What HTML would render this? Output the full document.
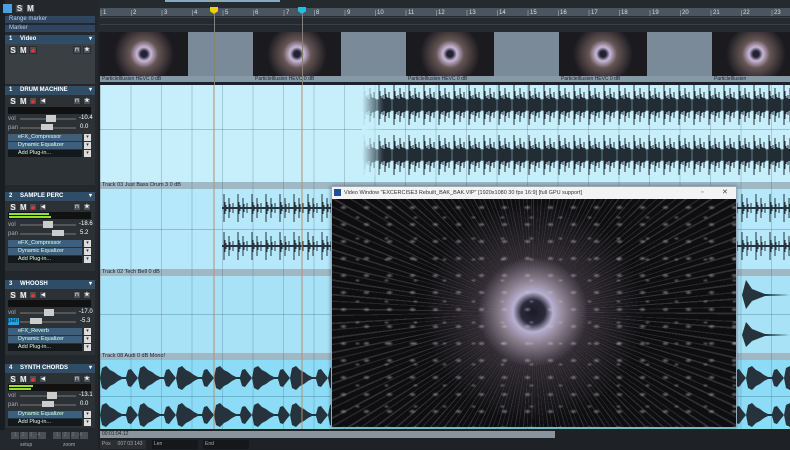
<!DOCTYPE html>
<html><head><meta charset="utf-8"><style>
*{margin:0;padding:0;box-sizing:border-box}
body{width:790px;height:450px;overflow:hidden;background:#1e2226;font-family:"Liberation Sans",sans-serif;font-size:6px;color:#dde;position:relative}
.a{position:absolute}
.btn{position:absolute;width:8px;height:8px;background:#4a5056;border:1px solid #2a2e32;color:#eee;font-size:8px;line-height:7px;text-align:center;font-weight:bold}
.tt{position:absolute;left:5px;width:90px;height:9px;background:#2f4d66;color:#fff;font-weight:bold;font-size:6px;line-height:9px;padding-left:4px}
.tt b{margin-left:6px}
.tt i{position:absolute;right:3px;top:0;font-style:normal;font-size:6px}
.pl{position:absolute;left:8px;width:74px;height:7px;line-height:7px;color:#dfe;font-size:5.5px;padding-left:10px}
.pd{position:absolute;left:84px;width:7px;height:7px;background:#ddd;color:#333;font-size:5px;text-align:center;line-height:7px}
.lbl{position:absolute;left:100px;width:690px;height:7px;background:#9fb8c4;color:#223;font-size:5.5px;line-height:7px;padding-left:2px}
.lane{position:absolute;left:100px;width:690px}
</style></head><body>
<div class="a" style="left:0;top:0;width:98px;height:430px;background:#24282c"></div>
<div class="a" style="left:0;top:0;width:5px;height:430px;background:#1a1d20"></div>
<div class="a" style="left:3px;top:4px;width:9px;height:9px;background:#4aa0e0"></div>
<div class="btn" style="left:15px;top:4px;width:9px;height:9px">S</div>
<div class="btn" style="left:26px;top:4px;width:9px;height:9px">M</div>
<div class="a" style="left:5px;top:16px;width:90px;height:7px;background:#2f4560;color:#bcd;padding-left:4px;line-height:7px">Range marker</div>
<div class="a" style="left:5px;top:25px;width:90px;height:7px;background:#2f4560;color:#bcd;padding-left:4px;line-height:7px">Marker</div>
<div class="tt" style="top:35px">1 <b>Video</b><i>▾</i></div>
<div class="a" style="left:5px;top:44px;width:90px;height:40px;background:#3a3f44"></div>
<div class="btn" style="left:9px;top:46px">S</div><div class="btn" style="left:19px;top:46px">M</div><div class="btn" style="left:29px;top:46px;color:#e33">●</div>
<div class="btn" style="left:73px;top:46px;font-size:5px">⊓</div><div class="btn" style="left:83px;top:46px;font-size:6px">★</div>

<div class="tt" style="top:86px">1 <b>DRUM MACHINE</b><i>▾</i></div>
<div class="a" style="left:5px;top:95px;width:90px;height:90px;background:#2c3136"></div>
<div class="btn" style="left:9px;top:97px">S</div><div class="btn" style="left:19px;top:97px">M</div><div class="btn" style="left:29px;top:97px;color:#e33">●</div><div class="btn" style="left:39px;top:97px;font-size:5px">◀</div>
<div class="btn" style="left:73px;top:97px;font-size:5px">⊓</div><div class="btn" style="left:83px;top:97px;font-size:6px">★</div>
<div class="a" style="left:8px;top:107px;width:83px;height:7px;background:#111"></div>
<div class="a" style="left:8px;top:116px;color:#aab">vol</div><div class="a" style="left:20px;top:118px;width:56px;height:2px;background:#555"></div><div class="a" style="left:46px;top:115px;width:10px;height:7px;background:#ccc"></div><div class="a" style="left:79px;top:115px;color:#fff">-10.4</div>
<div class="a" style="left:8px;top:125px;color:#aab">pan</div><div class="a" style="left:20px;top:127px;width:56px;height:2px;background:#555"></div><div class="a" style="left:41px;top:124px;width:12px;height:6px;background:#ccc"></div><div class="a" style="left:80px;top:124px;color:#fff">0.0</div>
<div class="pl" style="top:134px;background:#3c5f7e">eFX_Compressor</div><div class="pd" style="top:134px">▾</div>
<div class="pl" style="top:142px;background:#3c5f7e">Dynamic Equalizer</div><div class="pd" style="top:142px">▾</div>
<div class="pl" style="top:150px;background:#15181b">Add Plug-in...</div><div class="pd" style="top:150px">▾</div>

<div class="tt" style="top:192px">2 <b>SAMPLE PERC</b><i>▾</i></div>
<div class="a" style="left:5px;top:201px;width:90px;height:70px;background:#2c3136"></div>
<div class="btn" style="left:9px;top:203px">S</div><div class="btn" style="left:19px;top:203px">M</div><div class="btn" style="left:29px;top:203px;color:#e33">●</div><div class="btn" style="left:39px;top:203px;font-size:5px">◀</div>
<div class="btn" style="left:73px;top:203px;font-size:5px">⊓</div><div class="btn" style="left:83px;top:203px;font-size:6px">★</div>
<div class="a" style="left:8px;top:212px;width:83px;height:7px;background:#111"></div>
<div class="a" style="left:9px;top:213px;width:40px;height:2px;background:#9d3"></div><div class="a" style="left:9px;top:216px;width:42px;height:2px;background:#9d3"></div>
<div class="a" style="left:8px;top:222px;color:#aab">vol</div><div class="a" style="left:20px;top:224px;width:56px;height:2px;background:#555"></div><div class="a" style="left:43px;top:221px;width:10px;height:7px;background:#ccc"></div><div class="a" style="left:79px;top:221px;color:#fff">-18.6</div>
<div class="a" style="left:8px;top:231px;color:#aab">pan</div><div class="a" style="left:20px;top:233px;width:56px;height:2px;background:#555"></div><div class="a" style="left:52px;top:230px;width:12px;height:6px;background:#ccc"></div><div class="a" style="left:80px;top:230px;color:#fff">5.2</div>
<div class="pl" style="top:240px;background:#3c5f7e">eFX_Compressor</div><div class="pd" style="top:240px">▾</div>
<div class="pl" style="top:248px;background:#3c5f7e">Dynamic Equalizer</div><div class="pd" style="top:248px">▾</div>
<div class="pl" style="top:256px;background:#15181b">Add Plug-in...</div><div class="pd" style="top:256px">▾</div>

<div class="tt" style="top:280px">3 <b>WHOOSH</b><i>▾</i></div>
<div class="a" style="left:5px;top:289px;width:90px;height:66px;background:#2c3136"></div>
<div class="btn" style="left:9px;top:291px">S</div><div class="btn" style="left:19px;top:291px">M</div><div class="btn" style="left:29px;top:291px;color:#e33">●</div><div class="btn" style="left:39px;top:291px;font-size:5px">◀</div>
<div class="btn" style="left:73px;top:291px;font-size:5px">⊓</div><div class="btn" style="left:83px;top:291px;font-size:6px">★</div>
<div class="a" style="left:8px;top:300px;width:83px;height:7px;background:#111"></div>
<div class="a" style="left:8px;top:310px;color:#aab">vol</div><div class="a" style="left:20px;top:312px;width:56px;height:2px;background:#555"></div><div class="a" style="left:44px;top:309px;width:10px;height:7px;background:#ccc"></div><div class="a" style="left:79px;top:309px;color:#fff">-17.0</div>
<div class="a" style="left:8px;top:318px;width:11px;height:7px;background:#2aa0e0;color:#123">pan</div><div class="a" style="left:20px;top:321px;width:56px;height:2px;background:#555"></div><div class="a" style="left:30px;top:318px;width:12px;height:6px;background:#ccc"></div><div class="a" style="left:80px;top:318px;color:#fff">-5.3</div>
<div class="pl" style="top:328px;background:#3c5f7e">eFX_Reverb</div><div class="pd" style="top:328px">▾</div>
<div class="pl" style="top:336px;background:#3c5f7e">Dynamic Equalizer</div><div class="pd" style="top:336px">▾</div>
<div class="pl" style="top:344px;background:#15181b">Add Plug-in...</div><div class="pd" style="top:344px">▾</div>

<div class="tt" style="top:364px">4 <b>SYNTH CHORDS</b><i>▾</i></div>
<div class="a" style="left:5px;top:373px;width:90px;height:55px;background:#2c3136"></div>
<div class="btn" style="left:9px;top:375px">S</div><div class="btn" style="left:19px;top:375px">M</div><div class="btn" style="left:29px;top:375px;color:#e33">●</div><div class="btn" style="left:39px;top:375px;font-size:5px">◀</div>
<div class="btn" style="left:73px;top:375px;font-size:5px">⊓</div><div class="btn" style="left:83px;top:375px;font-size:6px">★</div>
<div class="a" style="left:8px;top:384px;width:83px;height:7px;background:#111"></div>
<div class="a" style="left:9px;top:385px;width:24px;height:2px;background:#9d3"></div><div class="a" style="left:9px;top:388px;width:22px;height:2px;background:#9d3"></div>
<div class="a" style="left:8px;top:393px;color:#aab">vol</div><div class="a" style="left:20px;top:395px;width:56px;height:2px;background:#555"></div><div class="a" style="left:47px;top:392px;width:10px;height:7px;background:#ccc"></div><div class="a" style="left:79px;top:392px;color:#fff">-13.1</div>
<div class="a" style="left:8px;top:402px;color:#aab">pan</div><div class="a" style="left:20px;top:404px;width:56px;height:2px;background:#555"></div><div class="a" style="left:42px;top:401px;width:12px;height:6px;background:#ccc"></div><div class="a" style="left:80px;top:401px;color:#fff">0.0</div>
<div class="pl" style="top:411px;background:#3c5f7e">Dynamic Equalizer</div><div class="pd" style="top:411px">▾</div>
<div class="pl" style="top:419px;background:#15181b">Add Plug-in...</div><div class="pd" style="top:419px">▾</div>

<div class="a" style="left:0;top:430px;width:98px;height:20px;background:#24282c"></div>
<div class="a" style="left:11px;top:432px;width:36px;height:7px;background:repeating-linear-gradient(90deg,#4a4f55 0 8px,#24282c 8px 9px);color:#777;font-size:5px;letter-spacing:5px;padding-left:3px">1234</div>
<div class="a" style="left:53px;top:432px;width:36px;height:7px;background:repeating-linear-gradient(90deg,#4a4f55 0 8px,#24282c 8px 9px);color:#777;font-size:5px;letter-spacing:5px;padding-left:3px">1234</div>
<div class="a" style="left:20px;top:442px;color:#aaa;font-size:5px">setup</div><div class="a" style="left:63px;top:442px;color:#aaa;font-size:5px">zoom</div>

<div class="a" style="left:98px;top:0;width:692px;height:32px;background:#252a2f"></div>
<div class="a" style="left:165px;top:0;width:115px;height:2px;background:#8ab"></div>
<div class="a" style="left:100px;top:8px;width:690px;height:8px;background:#4a5560"></div>
<svg class="a" style="left:100px;top:8px" width="690" height="8">
<g fill="#ddd" font-size="6" font-family="Liberation Sans">
<text x="3" y="6">1</text><text x="33" y="6">2</text><text x="64" y="6">3</text><text x="94" y="6">4</text><text x="125" y="6">5</text><text x="155" y="6">6</text><text x="186" y="6">7</text><text x="216" y="6">8</text><text x="247" y="6">9</text><text x="277" y="6">10</text><text x="308" y="6">11</text><text x="338" y="6">12</text><text x="369" y="6">13</text><text x="399" y="6">14</text><text x="430" y="6">15</text><text x="460" y="6">16</text><text x="491" y="6">17</text><text x="521" y="6">18</text><text x="552" y="6">19</text><text x="582" y="6">20</text><text x="613" y="6">21</text><text x="643" y="6">22</text><text x="674" y="6">23</text>
</g>
<path d="M1 2v6M31.5 2v6M62 2v6M92.5 2v6M123 2v6M153.5 2v6M184 2v6M214.5 2v6M245 2v6M275.5 2v6M306 2v6M336.5 2v6M367 2v6M397.5 2v6M428 2v6M458.5 2v6M489 2v6M519.5 2v6M550 2v6M580.5 2v6M611 2v6M641.5 2v6M672 2v6" stroke="#aaa" stroke-width=".6"/>
</svg>
<div class="a" style="left:100px;top:17px;width:690px;height:1px;background:#3a4046"></div>
<div class="a" style="left:100px;top:24px;width:690px;height:1px;background:#3a4046"></div>
<div class="a" style="left:210px;top:7px;width:8px;height:7px;background:#f0d000;clip-path:polygon(0 0,100% 0,100% 60%,50% 100%,0 60%)"></div>
<div class="a" style="left:298px;top:7px;width:8px;height:7px;background:#20c0e0;clip-path:polygon(0 0,100% 0,100% 60%,50% 100%,0 60%)"></div>

<div class="lane" style="top:32px;height:50px;background:#7a8a98"></div>
<div class="lane" style="top:76px;height:6px;background:#8799a6"></div>
<div class="a" style="left:100px;top:32px;width:88px;height:44px;background:radial-gradient(circle at 50% 50%,#223 3px,#c8b8d8 7px,#655 14px,#1a1a1f 30px),#111"></div>
<div class="a" style="left:253px;top:32px;width:88px;height:44px;background:radial-gradient(circle at 50% 50%,#223 3px,#c8b8d8 7px,#655 14px,#1a1a1f 30px),#111"></div>
<div class="a" style="left:406px;top:32px;width:88px;height:44px;background:radial-gradient(circle at 50% 50%,#223 3px,#c8b8d8 7px,#655 14px,#1a1a1f 30px),#111"></div>
<div class="a" style="left:559px;top:32px;width:88px;height:44px;background:radial-gradient(circle at 50% 50%,#223 3px,#c8b8d8 7px,#655 14px,#1a1a1f 30px),#111"></div>
<div class="a" style="left:712px;top:32px;width:88px;height:44px;background:radial-gradient(circle at 50% 50%,#223 3px,#c8b8d8 7px,#655 14px,#1a1a1f 30px),#111"></div>
<div class="a" style="left:102px;top:76px;font-size:5px;color:#223">ParticleIllusion HEVC  0 dB</div>
<div class="a" style="left:255px;top:76px;font-size:5px;color:#223">ParticleIllusion HEVC  0 dB</div>
<div class="a" style="left:408px;top:76px;font-size:5px;color:#223">ParticleIllusion HEVC  0 dB</div>
<div class="a" style="left:561px;top:76px;font-size:5px;color:#223">ParticleIllusion HEVC  0 dB</div>
<div class="a" style="left:714px;top:76px;font-size:5px;color:#223">ParticleIllusion</div>
<div class="a" style="left:100px;top:82px;width:690px;height:3px;background:#1e2226"></div>

<div class="lane" style="top:85px;height:97px;background:#c6eefb"></div>
<div class="lbl" style="top:182px">Track 03 Just Bass Drum 3   0 dB</div>
<div class="lane" style="top:189px;height:80px;background:#b4e8fa"></div>
<div class="lbl" style="top:269px">Track 02 Tech Bell   0 dB</div>
<div class="lane" style="top:276px;height:77px;background:#a8e2f6"></div>
<div class="lbl" style="top:353px">Track 08 Audi   0 dB   Mono!</div>
<div class="lane" style="top:360px;height:69px;background:#8cdcf7"></div>

<div class="a" style="left:100px;top:85px;width:690px;height:344px;background:repeating-linear-gradient(90deg,rgba(60,90,110,.25) 0 1px,transparent 1px 30.5px)"></div>
<div class="a" style="left:100px;top:129px;width:690px;height:1px;background:rgba(60,90,110,.3)"></div>
<div class="a" style="left:100px;top:229px;width:690px;height:1px;background:rgba(60,90,110,.3)"></div>
<div class="a" style="left:100px;top:314px;width:690px;height:1px;background:rgba(60,90,110,.3)"></div>
<div class="a" style="left:100px;top:396px;width:690px;height:1px;background:rgba(60,90,110,.3)"></div>

<svg class="a" style="left:100px;top:85px" width="690" height="344">
<defs>
<pattern id="dr" width="15" height="50" patternUnits="userSpaceOnUse" x="262" y="0">
<path d="M0 14h15v12H0Z" fill="#4a5a66" opacity=".8"/>
<path d="M1 15v10M2 0v40M3 6v28M4 11v18M5 13v14M6 10v20M7 14v12M8 3v34M9 9v22M10 12v16M11 13v14M12 7v26M13 13v14M14 15v10" stroke="#222c35" stroke-width="1"/>
</pattern>
<pattern id="sp" width="14" height="38" patternUnits="userSpaceOnUse" x="122" y="103">
<path d="M0 19h14v2H0Z" fill="#26323c"/>
<path d="M2 6v28M3 14v12M4 17v6M7 10v20M8 16v8M11 15v10" stroke="#26323c"/>
</pattern>
<pattern id="sy" width="38" height="37" patternUnits="userSpaceOnUse" x="0" y="273">
<path d="M0 20L2 10L6 8L10 12L14 14L18 17L22 19L26 19L28 12L31 11L34 15L38 20L34 25L31 29L28 28L26 21L22 21L18 23L14 26L10 28L6 32L2 30Z" fill="#26323c"/>
</pattern>
<linearGradient id="fade" x1="0" x2="1"><stop offset="0" stop-color="#c6eefb"/><stop offset="1" stop-color="#c6eefb" stop-opacity="0"/></linearGradient>
</defs>
<rect x="262" y="0" width="428" height="40" fill="url(#dr)"/>
<rect x="262" y="50" width="428" height="40" fill="url(#dr)"/>
<rect x="262" y="0" width="22" height="90" fill="url(#fade)"/>
<rect x="122" y="103" width="568" height="38" fill="url(#sp)"/>
<rect x="122" y="141" width="568" height="38" fill="url(#sp)"/>
<rect x="0" y="276" width="690" height="34" fill="url(#sy)"/>
<rect x="0" y="313" width="690" height="31" fill="url(#sy)"/>
<path d="M642 210L646 195L652 204L665 209L690 210L665 211L652 216L646 224Z M642 250L646 237L652 244L665 249L690 250L665 251L652 256L646 262Z" fill="#26323c"/>
<path d="M114 0v344" stroke="#b09078" stroke-width="1"/>
<path d="M202 0v344" stroke="#b09078" stroke-width="1"/>
</svg>
<div class="a" style="left:214px;top:14px;width:1px;height:71px;background:#8a8070"></div>
<div class="a" style="left:302px;top:14px;width:1px;height:71px;background:#8a8070"></div>

<div class="a" style="left:331px;top:186px;width:406px;height:242px;background:#000;border:1px solid #9ab;box-shadow:0 0 4px rgba(0,0,0,.4)"></div>
<div class="a" style="left:332px;top:187px;width:404px;height:12px;background:#f3f3f3;color:#333;font-size:5.5px;line-height:12px;padding-left:12px">Video Window "EXCERCISE3 Rebuilt_BAK_BAK.VIP"  [1920x1080 30 fps 16:9] [full GPU support]</div>
<div class="a" style="left:334px;top:189px;width:7px;height:7px;background:#1d4f9a"></div>
<div class="a" style="left:701px;top:187px;color:#666;font-size:7px;line-height:12px">▫</div>
<div class="a" style="left:722px;top:187px;color:#444;font-size:7px;line-height:12px">✕</div>
<div class="a" style="left:332px;top:199px;width:404px;height:228px;overflow:hidden;background:radial-gradient(circle at 201px 113px,#1a1a28 0,#2a2a3a 12px,#b8b0d0 20px,#8a8090 32px,rgba(80,70,80,.5) 55px,rgba(20,20,24,0) 110px),repeating-conic-gradient(from 0deg at 201px 113px,rgba(200,200,210,.18) 0 .5deg,rgba(0,0,0,0) .5deg 2.3deg,rgba(220,220,230,.12) 2.3deg 2.7deg,rgba(0,0,0,0) 2.7deg 4.1deg),#0e0e10"></div>
<div class="a" style="left:332px;top:199px;width:404px;height:228px;background:radial-gradient(ellipse 4px 2.5px,rgba(200,200,210,.5) 0,transparent 100%) 0 0/23px 17px,radial-gradient(ellipse 3px 2px,rgba(200,200,210,.4) 0,transparent 100%) 11px 8px/29px 21px"></div>

<div class="a" style="left:98px;top:429px;width:692px;height:21px;background:#1e2226"></div>
<div class="a" style="left:100px;top:431px;width:455px;height:7px;background:#8a949c;color:#222;font-size:5px;line-height:7px;padding-left:2px">00:01:04.12</div>
<div class="a" style="left:100px;top:440px;width:46px;height:9px;background:#2b2f33;color:#aaa;font-size:5px;line-height:9px;padding-left:2px">Pos &nbsp;&nbsp;&nbsp; 007 03 143</div>
<div class="a" style="left:152px;top:440px;width:46px;height:9px;background:#15181b;color:#aaa;font-size:5px;line-height:9px;padding-left:2px">Len</div>
<div class="a" style="left:203px;top:440px;width:46px;height:9px;background:#15181b;color:#aaa;font-size:5px;line-height:9px;padding-left:2px">End</div>
</body></html>
